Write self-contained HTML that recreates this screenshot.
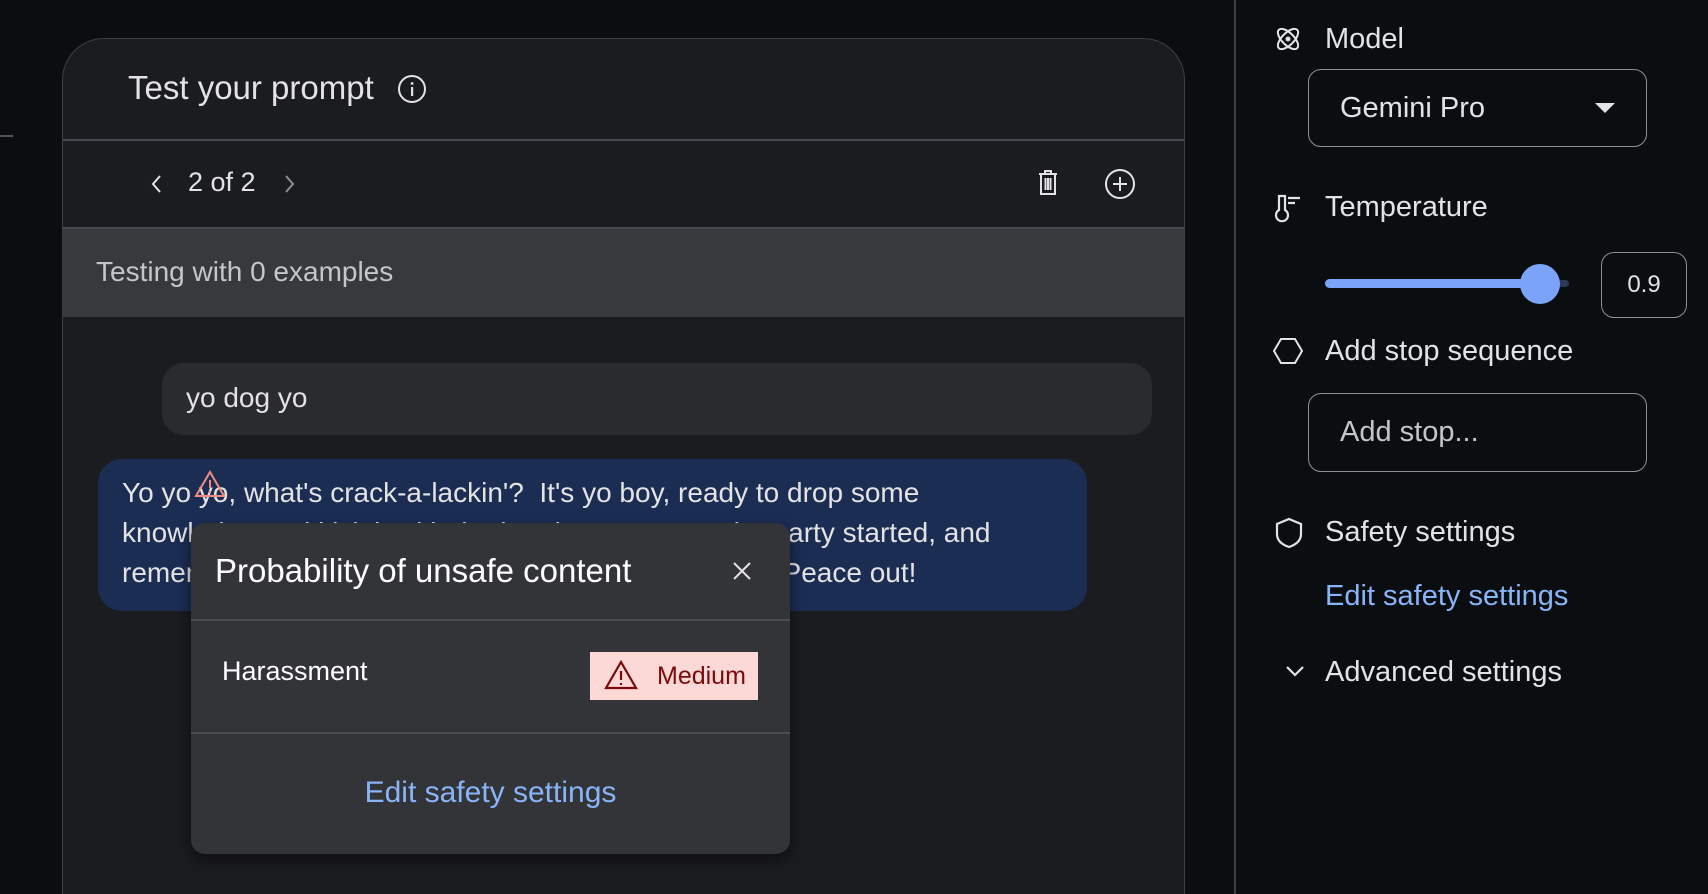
<!DOCTYPE html>
<html><head><meta charset="utf-8"><style>
*{margin:0;padding:0;box-sizing:border-box}
html{width:1708px;height:894px;overflow:hidden}
body{width:1708px;height:894px;background:#0b0e11;font-family:"Liberation Sans",sans-serif;color:#e3e3e3;position:relative;overflow:hidden}
.abs{position:absolute}
.card{left:62px;top:38px;width:1123px;height:856px;border:1.5px solid #3c3f44;border-bottom:none;border-radius:42px 42px 0 0;background:#1b1c1f;overflow:hidden}
.t{white-space:nowrap;line-height:1}
.side{color:#e3e3e3;font-size:29px}
.box{border:1.5px solid #8e918f;border-radius:13px}
</style></head><body>
<div class="abs" style="left:0;top:135px;width:13px;height:2px;background:#555"></div>
<div class="abs card">
  <div class="abs t" style="left:65px;top:32px;font-size:33px;color:#e3e3e3">Test your prompt</div>
  <svg class="abs" style="left:334px;top:35px" width="30" height="30" viewBox="0 0 30 30"><circle cx="15" cy="15" r="13" fill="none" stroke="#e3e3e3" stroke-width="2"/><rect x="14" y="13" width="2.2" height="9" fill="#e3e3e3"/><circle cx="15.1" cy="9.5" r="1.4" fill="#e3e3e3"/></svg>
  <div class="abs" style="left:0;top:100px;width:100%;height:2px;background:#46494d"></div>
  <svg class="abs" style="left:84px;top:133px" width="20" height="24" viewBox="0 0 20 24"><path d="M13 4 L6 12 L13 20" fill="none" stroke="#e3e3e3" stroke-width="2"/></svg>
  <div class="abs t" style="left:125px;top:130px;font-size:27px">2 of 2</div>
  <svg class="abs" style="left:216px;top:133px" width="20" height="24" viewBox="0 0 20 24"><path d="M7 4 L14 12 L7 20" fill="none" stroke="#8e918f" stroke-width="2"/></svg>
  <svg class="abs" style="left:973px;top:129px" width="24" height="30" viewBox="0 0 24 30"><path d="M3 6 H21 M9 6 V3 H15 V6 M5 6 V26 H19 V6 M9.5 10 V22 M12 10 V22 M14.5 10 V22" fill="none" stroke="#e3e3e3" stroke-width="2"/></svg>
  <svg class="abs" style="left:1041px;top:129px" width="32" height="32" viewBox="0 0 32 32"><circle cx="16" cy="16" r="14" fill="none" stroke="#e3e3e3" stroke-width="2"/><path d="M16 9 V23 M9 16 H23" stroke="#e3e3e3" stroke-width="2"/></svg>
  <div class="abs" style="left:0;top:188px;width:100%;height:90px;background:#38393d;border-top:2px solid #46494d"></div>
  <div class="abs t" style="left:33px;top:219px;font-size:28px;color:#c4c7c5">Testing with 0 examples</div>
  <div class="abs" style="left:99px;top:324px;width:990px;height:72px;background:#2a2b2f;border-radius:22px"></div>
  <div class="abs t" style="left:123px;top:345px;font-size:28px">yo dog yo</div>
  <div class="abs" style="left:35px;top:420px;width:989px;height:152px;background:#1c2d54;border-radius:24px"></div>
  <div class="abs t" style="left:59px;top:434px;font-size:28px;line-height:40px">Yo yo yo, what's crack-a-lackin'?&nbsp; It's yo boy, ready to drop some<br>knowledge and kick it with the homies as we get the party started, and<br>remember to stay fresh, ya'll are the best of the best. Peace out!</div>
  <svg class="abs" style="left:130px;top:430px" width="34" height="30" viewBox="0 0 34 30"><path d="M17 3 L31 27 H3 Z" fill="none" stroke="#f28b82" stroke-width="2"/><path d="M17 11 V19 M17 22 V24" stroke="#f28b82" stroke-width="2"/></svg>
</div>
<div class="abs" style="left:191px;top:523px;width:599px;height:331px;background:#333437;border-radius:14px;box-shadow:0 6px 16px rgba(0,0,0,.5)">
  <div class="abs t" style="left:24px;top:31px;font-size:33px;color:#fff">Probability of unsafe content</div>
  <svg class="abs" style="left:539px;top:36px" width="24" height="24" viewBox="0 0 24 24"><path d="M4 4 L20 20 M20 4 L4 20" stroke="#e3e3e3" stroke-width="2"/></svg>
  <div class="abs" style="left:0;top:96px;width:100%;height:2px;background:#4a4c50"></div>
  <div class="abs t" style="left:31px;top:135px;font-size:27px;color:#fff">Harassment</div>
  <div class="abs" style="left:399px;top:129px;width:168px;height:48px;background:#fcd8d6"></div>
  <svg class="abs" style="left:413px;top:137px" width="34" height="30" viewBox="0 0 34 30"><path d="M17 2 L32 28 H2 Z" fill="none" stroke="#7a0b0b" stroke-width="2.2"/><path d="M17 11 V20 M17 23 V25" stroke="#7a0b0b" stroke-width="2.2"/></svg>
  <div class="abs t" style="left:466px;top:141px;font-size:25px;color:#7a0b0b">Medium</div>
  <div class="abs" style="left:0;top:209px;width:100%;height:2px;background:#4a4c50"></div>
  <div class="abs t" style="left:0;width:100%;text-align:center;top:255px;font-size:30px;color:#8ab4f8">Edit safety settings</div>
</div>
<div class="abs" style="left:1234px;top:0;width:2px;height:894px;background:#3c3f44"></div>
<svg class="abs" style="left:1274px;top:25px" width="28" height="28" viewBox="0 0 28 28" fill="none" stroke="#e3e3e3" stroke-width="2"><ellipse cx="14" cy="14" rx="13" ry="6" transform="rotate(45 14 14)"/><ellipse cx="14" cy="14" rx="13" ry="6" transform="rotate(-45 14 14)"/><circle cx="14" cy="14" r="1.5" fill="#e3e3e3"/></svg>
<div class="abs t side" style="left:1325px;top:25px">Model</div>
<div class="abs box" style="left:1308px;top:69px;width:339px;height:78px"></div>
<div class="abs t side" style="left:1340px;top:94px">Gemini Pro</div>
<svg class="abs" style="left:1595px;top:102px" width="20" height="12" viewBox="0 0 20 12"><path d="M0 1 H20 L10 11 Z" fill="#e3e3e3"/></svg>
<svg class="abs" style="left:1274px;top:193px" width="28" height="30" viewBox="0 0 28 30" fill="none" stroke="#e3e3e3" stroke-width="2.2"><path d="M5 3 H11 V17 A6 6 0 1 1 5 17 Z"/><path d="M14 5 H26 M14 10 H21"/></svg>
<div class="abs t side" style="left:1325px;top:193px">Temperature</div>
<div class="abs" style="left:1325px;top:280px;width:244px;height:7px;border-radius:4px;background:#2c3a55"></div>
<div class="abs" style="left:1325px;top:279px;width:215px;height:9px;border-radius:5px;background:#7ba4f8"></div>
<div class="abs" style="left:1520px;top:264px;width:40px;height:40px;border-radius:50%;background:#7ba4f8"></div>
<div class="abs box" style="left:1601px;top:252px;width:86px;height:66px"></div>
<div class="abs t" style="left:1601px;width:86px;text-align:center;top:273px;font-size:24px">0.9</div>
<svg class="abs" style="left:1272px;top:337px" width="32" height="28" viewBox="0 0 32 28"><path d="M9 2 H23 L30 14 L23 26 H9 L2 14 Z" fill="none" stroke="#e3e3e3" stroke-width="2"/></svg>
<div class="abs t side" style="left:1325px;top:337px">Add stop sequence</div>
<div class="abs box" style="left:1308px;top:393px;width:339px;height:79px"></div>
<div class="abs t side" style="left:1340px;top:418px;color:#c4c7c5">Add stop...</div>
<svg class="abs" style="left:1275px;top:517px" width="28" height="32" viewBox="0 0 28 32"><path d="M14 2 L26 7 V17 C26 24 20 28 14 30 C8 28 2 24 2 17 V7 Z" fill="none" stroke="#e3e3e3" stroke-width="2.2"/></svg>
<div class="abs t side" style="left:1325px;top:518px">Safety settings</div>
<div class="abs t side" style="left:1325px;top:582px;color:#8ab4f8">Edit safety settings</div>
<svg class="abs" style="left:1284px;top:664px" width="22" height="14" viewBox="0 0 22 14"><path d="M3 3 L11 11 L19 3" fill="none" stroke="#e3e3e3" stroke-width="2.2"/></svg>
<div class="abs t side" style="left:1325px;top:658px">Advanced settings</div>
</body></html>
